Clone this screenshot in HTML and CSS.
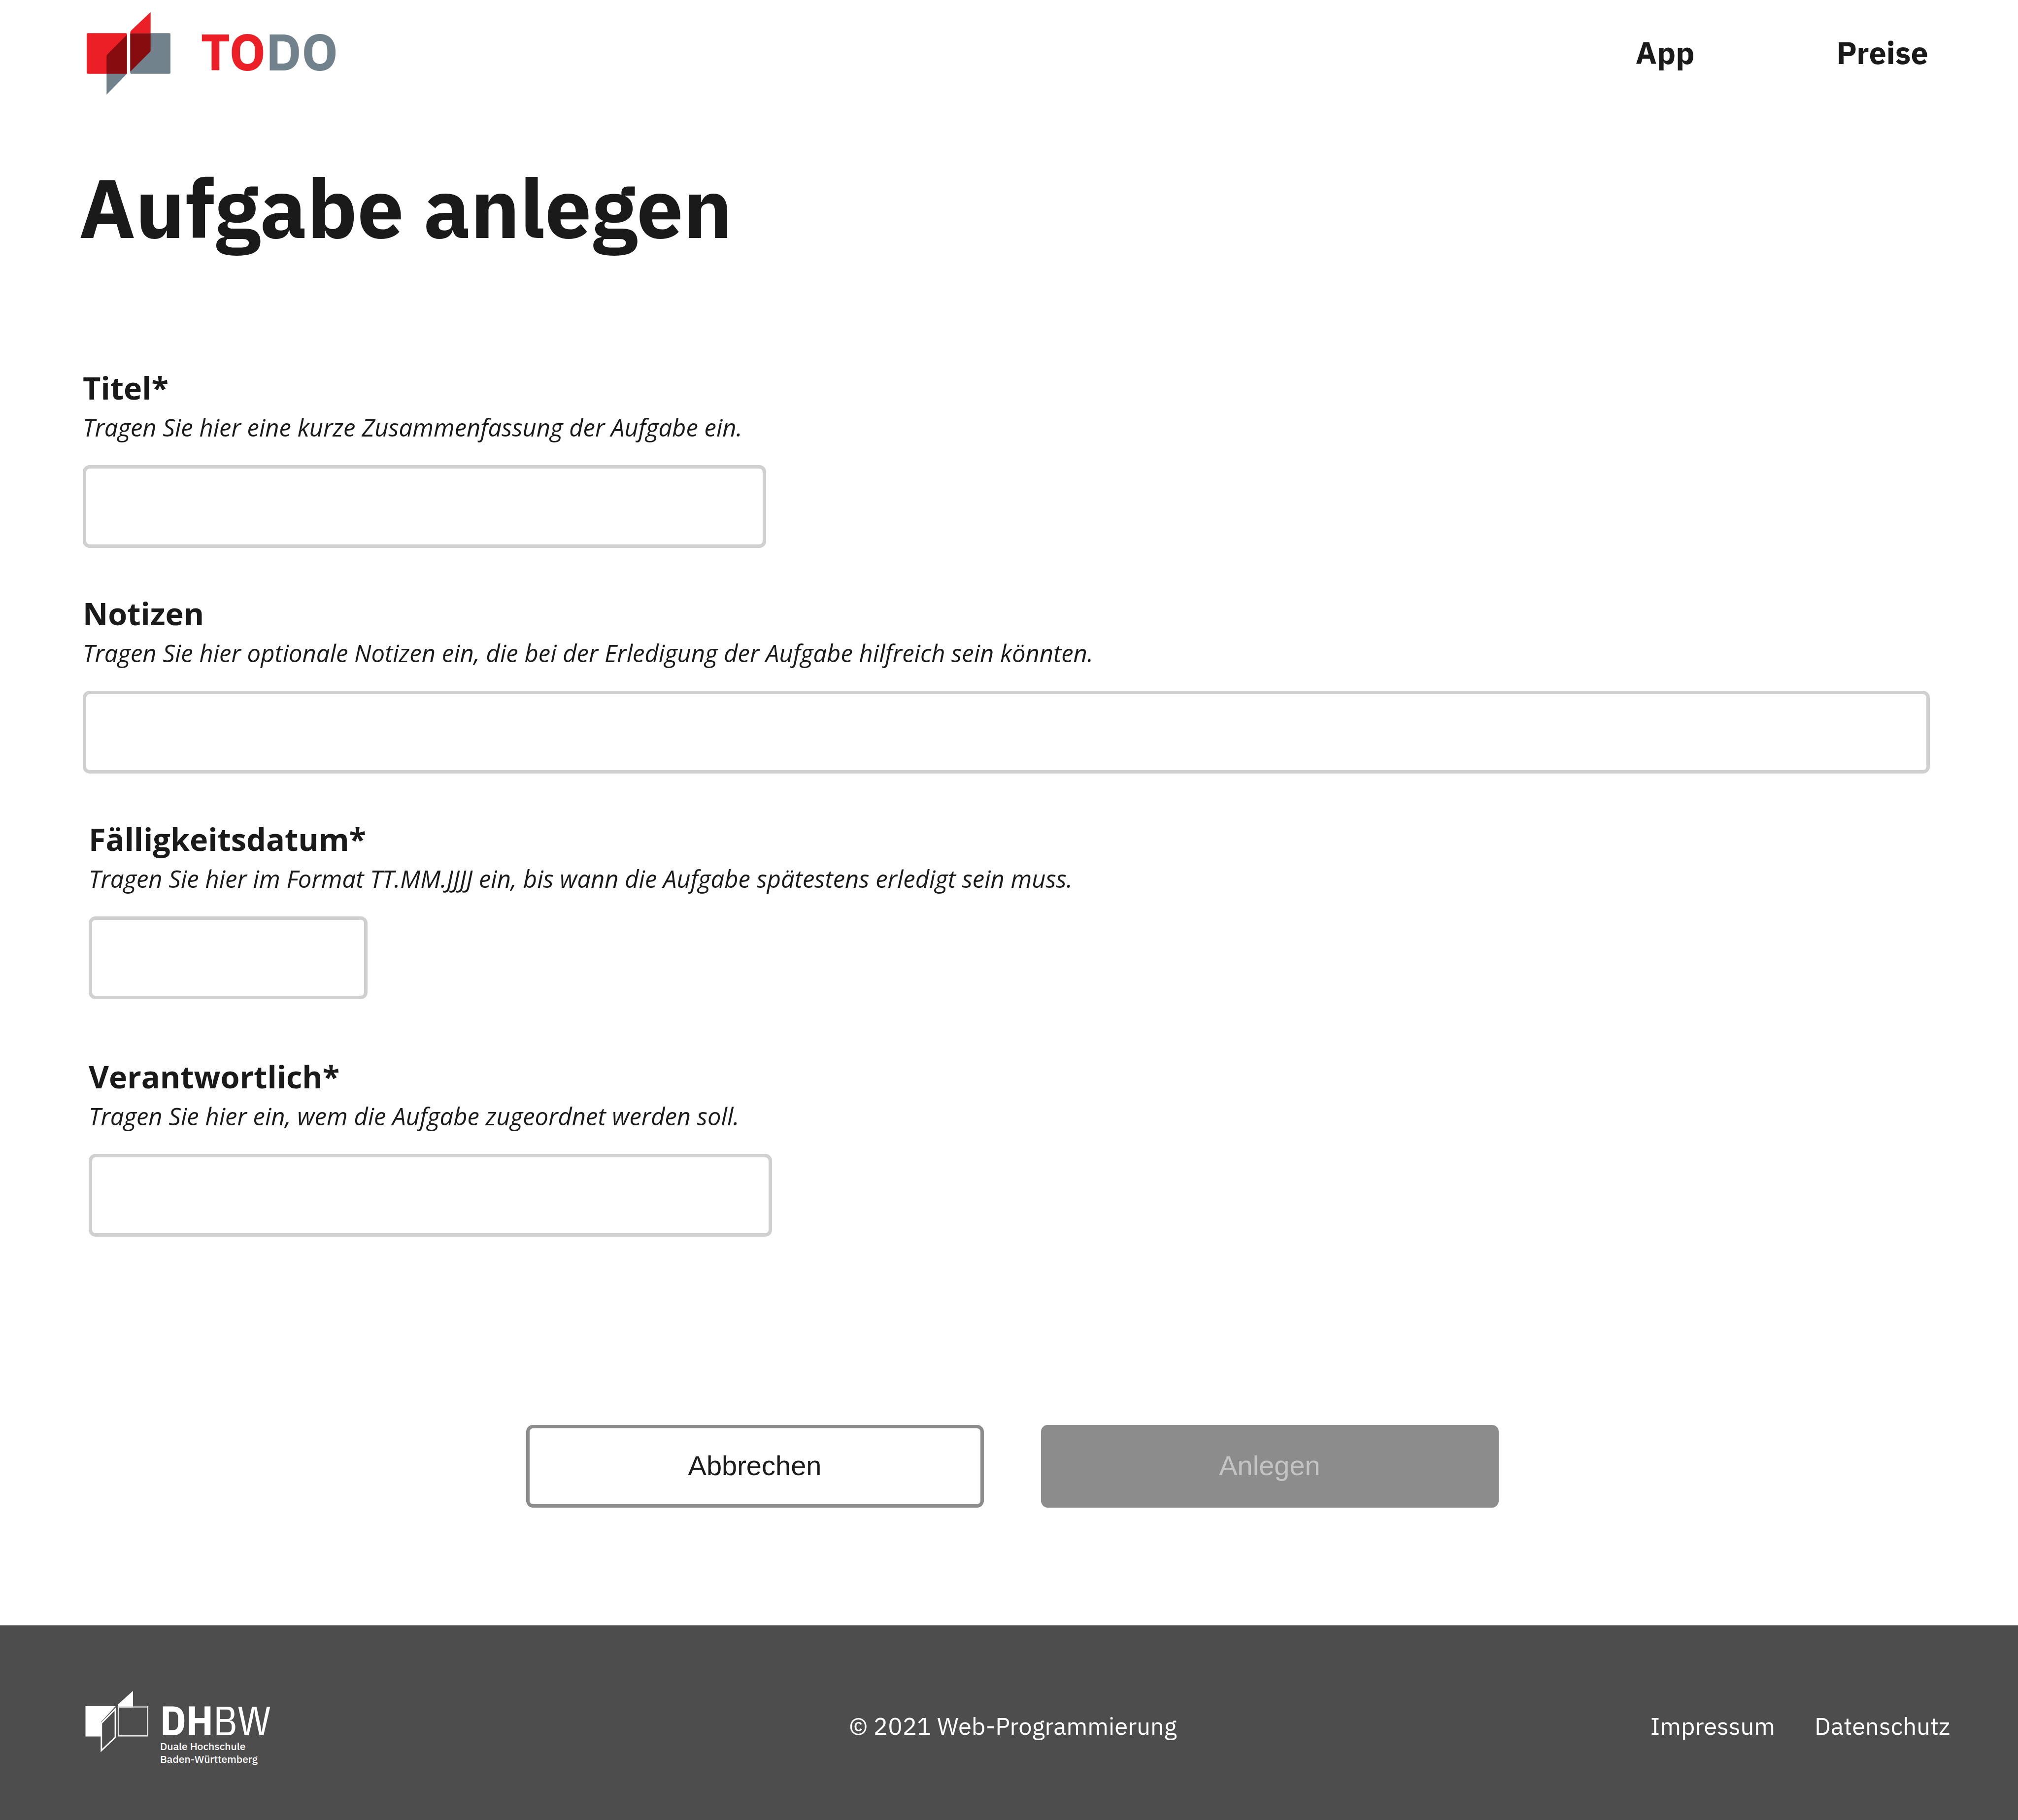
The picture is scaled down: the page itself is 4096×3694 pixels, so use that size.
FILE: index.html
```html
<!DOCTYPE html>
<html lang="de">
<head>
  <meta charset="utf-8">
  <title>Aufgabe anlegen</title>
  <link rel="stylesheet" href="styles.css">
</head>
<body>
  <header class="header">
    <a class="brand" href="#">
      <svg class="brand-icon" viewBox="180 25 177 173" aria-hidden="true">
        <rect x="181" y="69.500" width="84" height="85" rx="2" fill="#ec1f26"/>
        <rect x="272" y="69.500" width="84" height="85" rx="2" fill="#71828c"/>
        <path d="M222.500 154.500H265L222.500 198Z" fill="#71828c"/>
        <path d="M265 73V154.500H222.500V118Q222.500 115.500 224.500 113.500Z" fill="#870c0f"/>
        <path d="M314.500 25.500V70H272V68Q272 66 274 64Z" fill="#ec1f26"/>
        <path d="M272 70H314.500V105Q314.500 107.500 312.500 109.500L272 150Z" fill="#870c0f"/>
      </svg>
      <span class="brand-name">TO<span class="brand-tail">DO</span></span>
    </a>
    <nav class="nav">
      <a href="#">App</a>
      <a href="#">Preise</a>
    </nav>
  </header>

  <main class="main">
    <h1 class="title">Aufgabe anlegen</h1>
    <form class="form">
      <div class="field">
        <label class="label" for="titel">Titel*</label>
        <p class="hint" id="titel-hint">Tragen Sie hier eine kurze Zusammenfassung der Aufgabe ein.</p>
        <input class="input input-medium" id="titel" type="text" aria-describedby="titel-hint">
      </div>
      <div class="field">
        <label class="label" for="notizen">Notizen</label>
        <p class="hint" id="notizen-hint">Tragen Sie hier optionale Notizen ein, die bei der Erledigung der Aufgabe hilfreich sein könnten.</p>
        <input class="input" id="notizen" type="text" aria-describedby="notizen-hint">
      </div>
      <div class="details">
        <div class="field">
          <label class="label" for="datum">Fälligkeitsdatum*</label>
          <p class="hint" id="datum-hint">Tragen Sie hier im Format TT.MM.JJJJ ein, bis wann die Aufgabe spätestens erledigt sein muss.</p>
          <input class="input input-small" id="datum" type="text" aria-describedby="datum-hint">
        </div>
        <div class="field">
          <label class="label" for="person">Verantwortlich*</label>
          <p class="hint" id="person-hint">Tragen Sie hier ein, wem die Aufgabe zugeordnet werden soll.</p>
          <input class="input input-medium" id="person" type="text" aria-describedby="person-hint">
        </div>
      </div>
      <div class="actions">
        <button class="button" type="button">Abbrechen</button>
        <button class="button button-primary" type="submit" disabled>Anlegen</button>
      </div>
    </form>
  </main>

  <footer class="footer">
    <a class="dhbw" href="#">
      <svg class="dhbw-icon" viewBox="177 3526 133 130" aria-hidden="true">
        <path d="M178.500 3559H241.500L211 3592V3622.500H178.500Z" fill="#fff"/>
        <path d="M211.800 3594.500L241 3565V3624L211.800 3652Z" fill="none" stroke="#fff" stroke-width="3"/>
        <path d="M247 3560V3555L278 3527V3560Z" fill="#fff"/>
        <rect x="247.500" y="3560.500" width="61" height="60.500" fill="none" stroke="#e4e4e4" stroke-width="3"/>
        <path d="M278 3560.500H308" stroke="#a8a8a8" stroke-width="4"/>
      </svg>
      <span class="dhbw-text">
        <span class="dhbw-name"><b>DH</b>BW</span>
        <span class="dhbw-line">Duale Hochschule</span>
        <span class="dhbw-line">Baden-Württemberg</span>
      </span>
    </a>
    <p class="copyright">© 2021 Web-Programmierung</p>
    <nav class="legal">
      <a href="#">Impressum</a>
      <a href="#">Datenschutz</a>
    </nav>
  </footer>
</body>
</html>
```
FILE: styles.css
```css
* {
  box-sizing: border-box;
}

body {
  display: flex;
  flex-direction: column;
  min-height: 100vh;
  margin: 0;
  background: #fff;
  color: #1a1a1a;
  font-family: "IBM Plex Sans", "Open Sans", "Noto Sans", sans-serif;
}

a {
  color: inherit;
  text-decoration: none;
}

p {
  margin: 0;
}

/* Header */
.header {
  display: flex;
  align-items: center;
  justify-content: space-between;
  padding: 24px 182px 24px 175px;
}

.brand {
  display: flex;
  align-items: center;
  gap: 60px;
}

.brand-icon {
  width: 172px;
  height: 168px;
}

.brand-name {
  padding-bottom: 8px;
  color: #ec1f26;
  font-size: 104px;
  font-weight: 700;
  line-height: 120px;
}

.brand-tail {
  color: #71828c;
}

.nav {
  display: flex;
  gap: 288px;
  padding-bottom: 4px;
  font-size: 63px;
  font-weight: 700;
  line-height: 80px;
}

/* Form */
.main {
  flex: 1;
  padding: 96px 179px 238px 168px;
}

.title {
  margin: 0 0 219px -8px;
  font-size: 168px;
  font-weight: 700;
  line-height: 216px;
}

.form,
.details {
  display: flex;
  flex-direction: column;
  gap: 93px;
}

.details {
  gap: 117px;
  padding: 0 12px;
}

.field {
  display: flex;
  flex-direction: column;
}

.label {
  font-family: "Open Sans", sans-serif;
  font-size: 63px;
  font-weight: 700;
  line-height: 80px;
}

.hint {
  font-family: "Open Sans", sans-serif;
  font-size: 49px;
  font-style: italic;
  line-height: 80px;
}

.input {
  width: 100%;
  height: 168px;
  margin-top: 37px;
  padding: 0 32px;
  border: 7px solid #d0d0d0;
  border-radius: 14px;
  background: #fff;
  color: inherit;
  font: 56px "Liberation Sans", Arial, sans-serif;
}

.input-medium {
  max-width: 1387px;
}

.input-small {
  max-width: 566px;
}

.actions {
  display: flex;
  justify-content: center;
  gap: 116px;
  margin-top: 289px;
  padding-left: 24px;
}

.button {
  width: 929px;
  height: 168px;
  padding: 0 0 4px;
  border: 7px solid #8c8c8c;
  border-radius: 14px;
  background: #fff;
  color: #1a1a1a;
  font: 56px "Liberation Sans", Arial, sans-serif;
}

.button-primary {
  background: #8c8c8c;
  color: #c4c4c4;
}

/* Footer */
.footer {
  display: grid;
  grid-template-columns: 1fr auto 1fr;
  align-items: center;
  min-height: 395px;
  padding: 12px 138px 0 154px;
  background: #4d4d4d;
  color: #fff;
  font-size: 49px;
  line-height: 80px;
}

.dhbw {
  display: flex;
  gap: 24px;
  margin-top: 8px;
  padding: 0 18px;
}

.dhbw-icon {
  width: 129px;
  height: 126px;
}

.dhbw-text {
  display: flex;
  flex-direction: column;
  padding-top: 20px;
}

.dhbw-name {
  font-family: "IBM Plex Sans Condensed", "Liberation Sans Narrow", "IBM Plex Sans", sans-serif;
  font-size: 84px;
  line-height: 80px;
}

.dhbw-line {
  font-size: 21px;
  font-weight: 500;
  line-height: 26px;
}

.legal {
  display: flex;
  justify-content: flex-end;
  gap: 80px;
}
```
